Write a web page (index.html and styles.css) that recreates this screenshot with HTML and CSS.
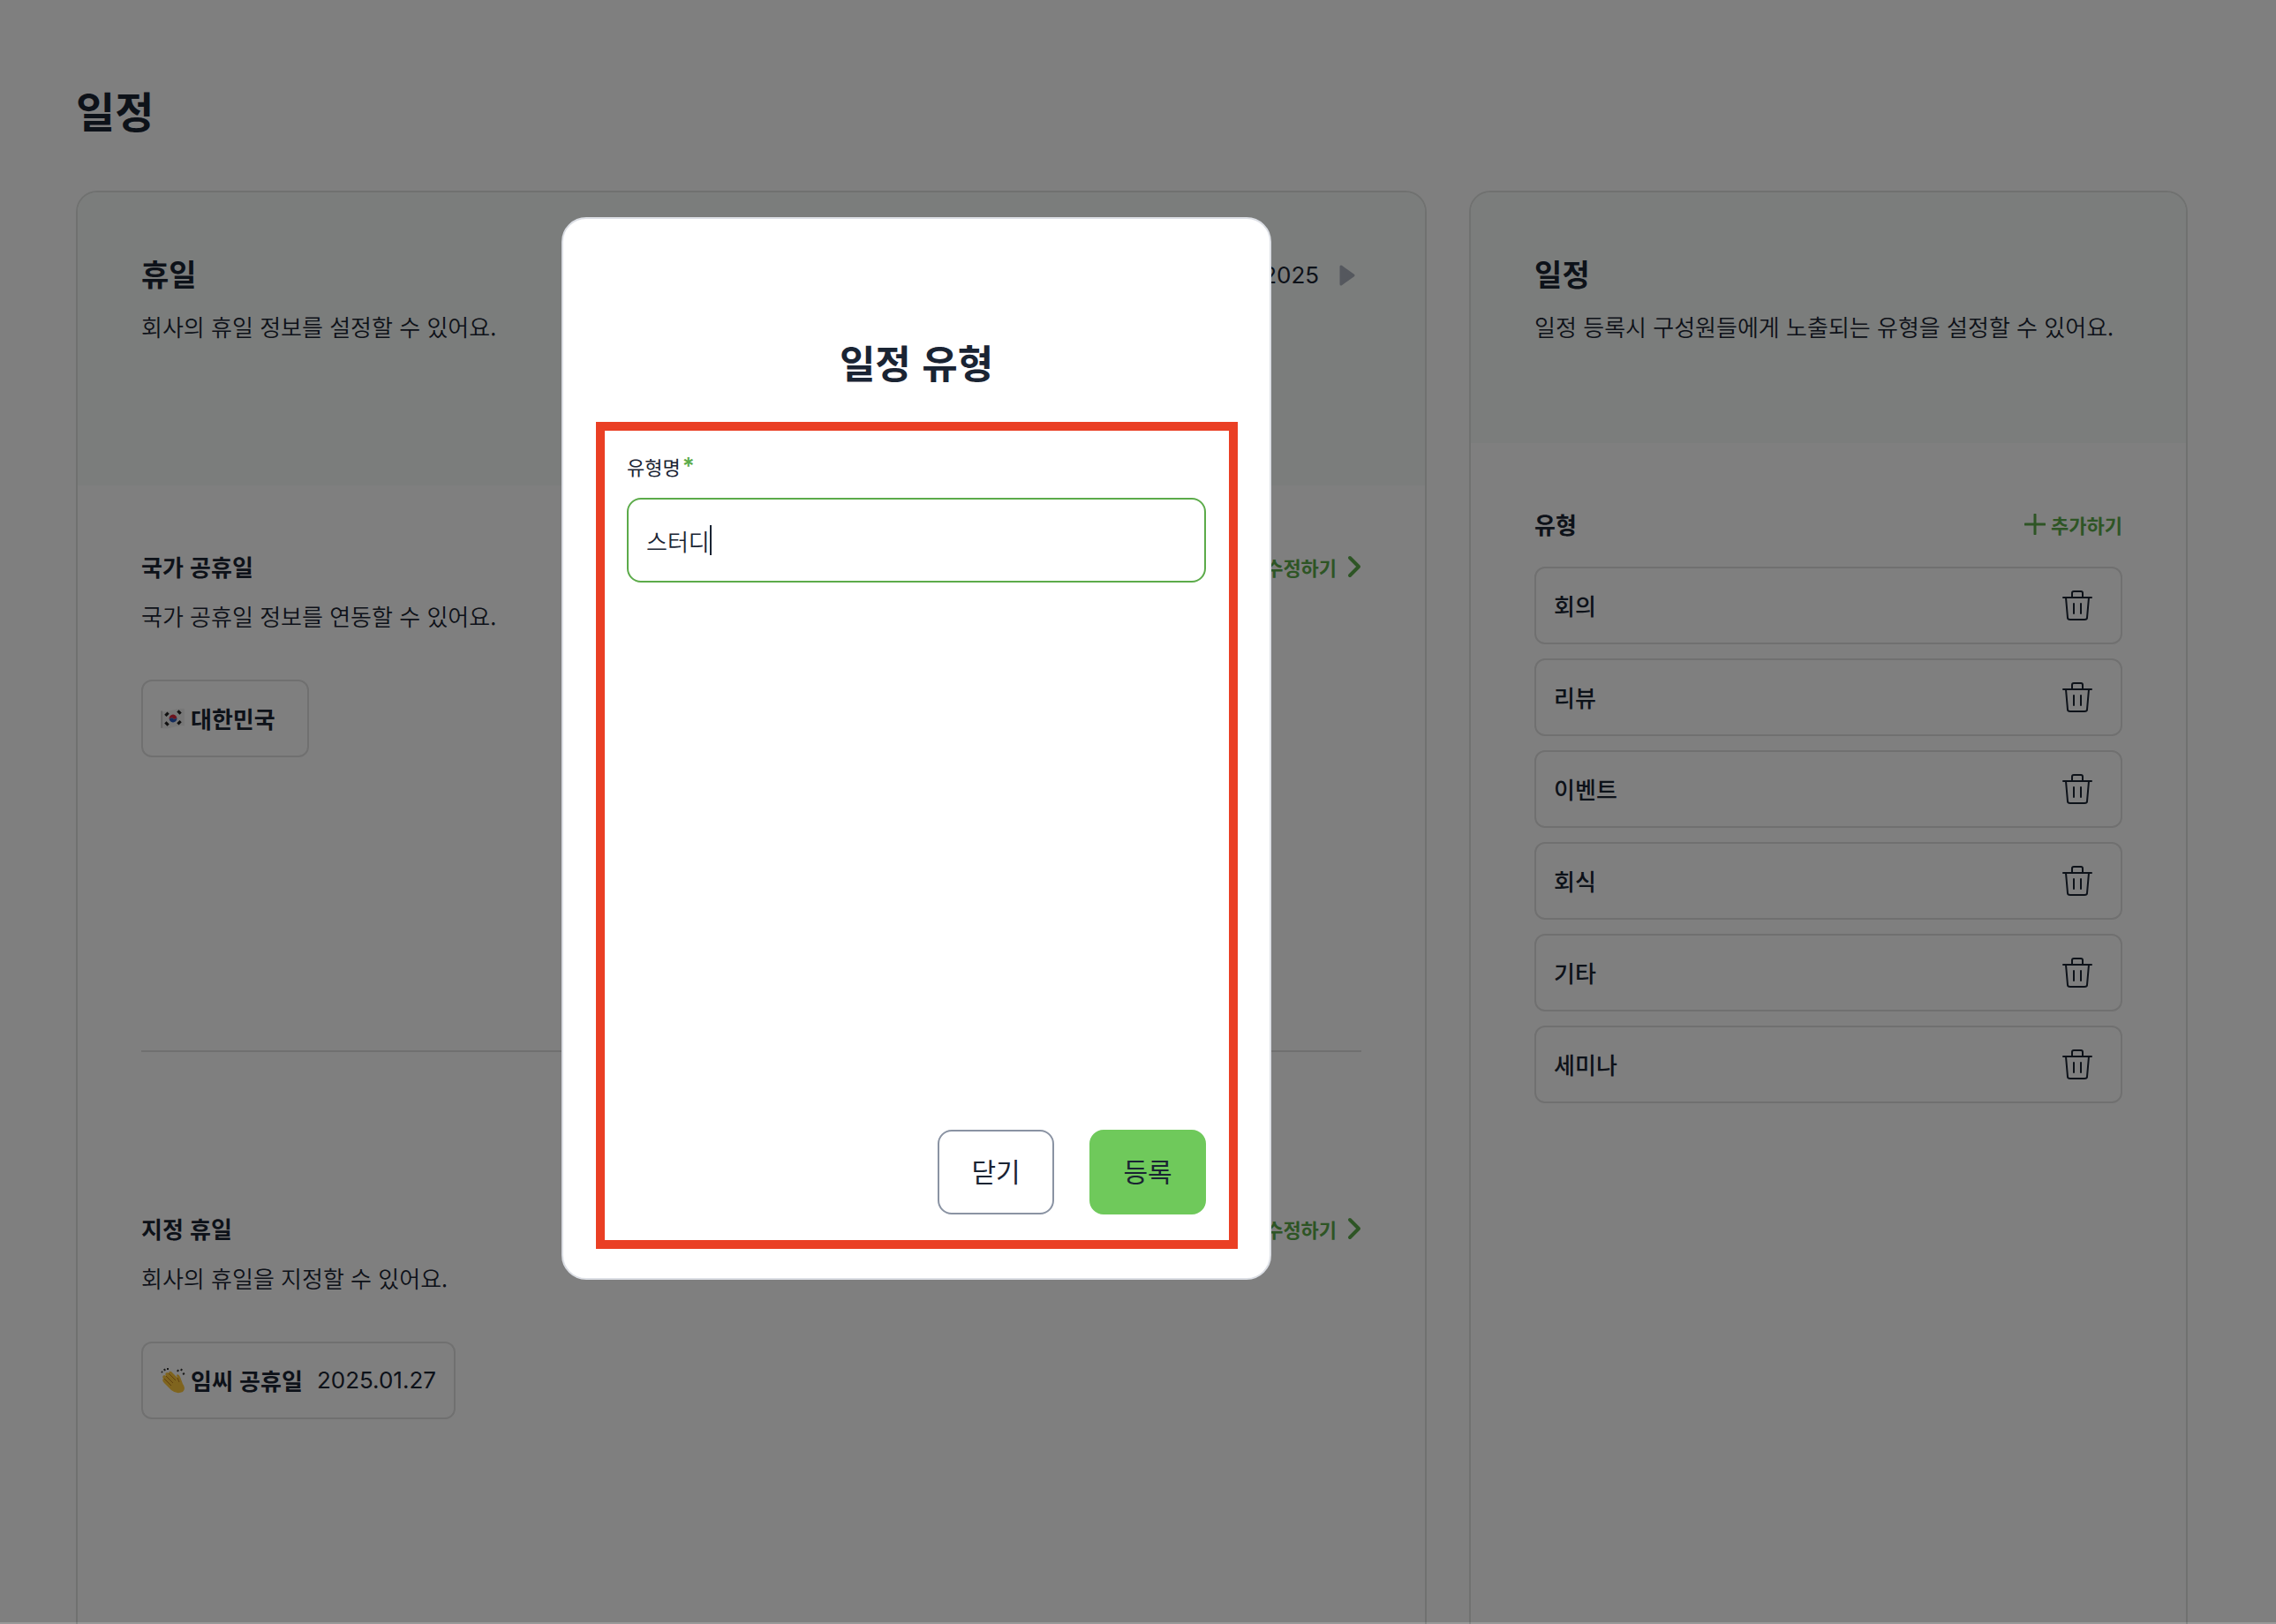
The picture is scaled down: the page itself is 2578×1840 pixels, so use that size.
FILE: index.html
```html
<!DOCTYPE html>
<html lang="ko">

<head>
    <meta charset="UTF-8">
    <meta name="viewport" content="width=device-width, initial-scale=1.0">
    <title>일정</title>
    <link rel="stylesheet" href="styles.css">
</head>

<body>
    <svg class="symbols" aria-hidden="true">
        <symbol id="trash" viewBox="0 0 34 36">
            <path d="M1 9H33M11 9V4Q11 2 13 2H21Q23 2 23 4V9M4 9L6 32Q6 34 9 34H25Q28 34 28 32L30 9M13 16V27M21 16V27" fill="none" stroke="currentColor" stroke-width="2" stroke-linecap="round" stroke-linejoin="round"/>
        </symbol>
        <symbol id="chevron" viewBox="0 0 16 26">
            <path d="M3 3L13 13L3 23" fill="none" stroke="currentColor" stroke-width="4" stroke-linecap="round" stroke-linejoin="round"/>
        </symbol>
    </svg>

    <main class="page">
        <h1 class="page-title">일정</h1>

        <div class="cards">
            <section class="card">
                <header class="card-header card-header-tall">
                    <div>
                        <h2 class="card-title">휴일</h2>
                        <p class="desc">회사의 휴일 정보를 설정할 수 있어요.</p>
                    </div>
                    <div class="year">
                        <button class="year-btn" type="button" aria-label="이전 연도">
                            <svg width="20" height="26" viewBox="0 0 20 26"><path d="M17 3V23L3 13Z" fill="currentColor" stroke="currentColor" stroke-width="3" stroke-linejoin="round"/></svg>
                        </button>
                        <span>2025</span>
                        <button class="year-btn" type="button" aria-label="다음 연도">
                            <svg width="20" height="26" viewBox="0 0 20 26"><path d="M3 3V23L17 13Z" fill="currentColor" stroke="currentColor" stroke-width="3" stroke-linejoin="round"/></svg>
                        </button>
                    </div>
                </header>

                <div class="card-body">
                    <section class="block">
                        <div class="block-head">
                            <h3 class="block-title">국가 공휴일</h3>
                            <a class="link" href="#">수정하기 <svg width="16" height="26"><use href="#chevron"/></svg></a>
                        </div>
                        <p class="desc">국가 공휴일 정보를 연동할 수 있어요.</p>
                        <div class="chip chip-country">
                            <svg class="emoji" viewBox="0 0 26 26" aria-hidden="true">
                                <path d="M1 5C8 8 17 1 25 3V21C17 19 8 26 1 23Z" fill="#eeeeee"/>
                                <path d="M1 5V23" stroke="#aaaaaa"/>
                                <path d="M9 14A4 4 0 0 1 17 12Q15 15 13 13Q11 11 9 14Z" fill="#d9243c"/>
                                <path d="M9 14A4 4 0 0 0 17 12Q15 15 13 13Q11 11 9 14Z" fill="#2456b8"/>
                                <path d="M5 10L8 7M18 19L21 16M5 17L8 20M18 5L21 8" stroke="#222222" stroke-width="3"/>
                            </svg>
                            <strong>대한민국</strong>
                        </div>
                    </section>

                    <hr class="divider">

                    <section>
                        <div class="block-head">
                            <h3 class="block-title">지정 휴일</h3>
                            <a class="link" href="#">수정하기 <svg width="16" height="26"><use href="#chevron"/></svg></a>
                        </div>
                        <p class="desc">회사의 휴일을 지정할 수 있어요.</p>
                        <div class="chip">
                            <svg class="emoji" viewBox="0 0 28 30" aria-hidden="true">
                                <path d="M3 13Q1 10 4 9L6 10Q4 6 8 6L9 7Q9 4 12 5L19 12L18 9Q20 7 22 11L25 19Q29 24 25 28Q18 31 12 26L4 18Q1 15 3 13Z" fill="#ffc83d"/>
                                <path d="M4 13L12 21M6 10L14 18M9 7L17 15M19 12L21 17" fill="none" stroke="#c07f1e"/>
                                <path d="M1 5L2 6M4 2L5 4M8 1L8 3M20 3L19 5M24 2L23 4M27 7L25 8" stroke="#333333" stroke-width="2"/>
                            </svg>
                            <strong>임씨 공휴일</strong>
                            <time class="date" datetime="2025-01-27">2025.01.27</time>
                        </div>
                    </section>
                </div>
            </section>

            <section class="card">
                <header class="card-header">
                    <div>
                        <h2 class="card-title">일정</h2>
                        <p class="desc">일정 등록시 구성원들에게 노출되는 유형을 설정할 수 있어요.</p>
                    </div>
                </header>

                <div class="card-body">
                    <div class="block-head">
                        <h3 class="block-title">유형</h3>
                        <button class="link link-add" type="button">
                            <svg width="24" height="24" viewBox="0 0 24 24"><path d="M12 1V23M1 12H23" stroke="currentColor" stroke-width="3" stroke-linecap="round"/></svg>
                            추가하기
                        </button>
                    </div>
                    <ul class="types">
                        <li class="type">회의<button class="trash-btn" type="button" aria-label="회의 삭제"><svg width="34" height="36"><use href="#trash"/></svg></button></li>
                        <li class="type">리뷰<button class="trash-btn" type="button" aria-label="리뷰 삭제"><svg width="34" height="36"><use href="#trash"/></svg></button></li>
                        <li class="type">이벤트<button class="trash-btn" type="button" aria-label="이벤트 삭제"><svg width="34" height="36"><use href="#trash"/></svg></button></li>
                        <li class="type">회식<button class="trash-btn" type="button" aria-label="회식 삭제"><svg width="34" height="36"><use href="#trash"/></svg></button></li>
                        <li class="type">기타<button class="trash-btn" type="button" aria-label="기타 삭제"><svg width="34" height="36"><use href="#trash"/></svg></button></li>
                        <li class="type">세미나<button class="trash-btn" type="button" aria-label="세미나 삭제"><svg width="34" height="36"><use href="#trash"/></svg></button></li>
                    </ul>
                </div>
            </section>
        </div>
    </main>

    <div class="overlay"></div>

    <form class="modal" role="dialog" aria-labelledby="modalTitle">
        <h2 class="modal-title" id="modalTitle">일정 유형</h2>
        <label class="label" for="typeName">유형명<span class="required">*</span></label>
        <div class="field">
            <input class="input" type="text" id="typeName" value="스터디">
            <span class="caret"></span>
        </div>
        <div class="actions">
            <button class="btn" type="button">닫기</button>
            <button class="btn btn-primary" type="submit">등록</button>
        </div>
        <div class="highlight"></div>
    </form>
</body>

</html>
```
FILE: styles.css
```css
* {
    box-sizing: border-box;
}

body {
    margin: 0;
    background-color: #fff;
    color: #1a2433;
    font-family: "Noto Sans CJK KR", sans-serif;
    font-size: 26px;
    line-height: 40px;
}

h1, h2, h3, p, ul {
    margin: 0;
    padding: 0;
}

button, input {
    font: inherit;
    color: inherit;
}

button {
    cursor: pointer;
}

svg {
    display: block;
    flex: none;
}

.symbols {
    display: none;
}

.page {
    display: flex;
    flex-direction: column;
    min-height: 100vh;
    padding: 88px 100px 0 86px;
}

.page-title {
    margin-bottom: 56px;
    font-size: 48px;
    line-height: 72px;
}

.cards {
    display: grid;
    grid-template-columns: 47fr 25fr;
    flex: 1;
    gap: 48px;
}

.card {
    min-width: 0;
    border: 2px solid #e0e3e1;
    border-bottom: none;
    border-radius: 24px 24px 0 0;
    overflow: hidden;
}

.card-header {
    display: flex;
    justify-content: space-between;
    align-items: flex-start;
    min-height: 284px;
    padding: 68px 72px;
    background-color: #f6faf8;
}

.card-header-tall {
    min-height: 332px;
}

.card-title {
    margin-bottom: 16px;
    font-size: 34px;
    line-height: 48px;
}

.desc {
    font-weight: 350;
}

.year {
    display: flex;
    align-items: center;
    gap: 22px;
    padding: 2px 6px 0 0;
    font-family: Inter, sans-serif;
    line-height: 48px;
}

.year-btn {
    padding: 0;
    border: none;
    background: none;
    color: #aab0bc;
}

.card-body {
    padding: 72px;
}

.block {
    min-height: 568px;
}

.block-head {
    display: flex;
    justify-content: space-between;
    align-items: center;
    margin-bottom: 16px;
}

.block-title {
    font-size: 26px;
    line-height: 40px;
}

.link {
    display: flex;
    align-items: center;
    gap: 12px;
    padding: 0;
    border: none;
    background: none;
    color: #5cab4a;
    font-size: 22px;
    font-weight: bold;
    line-height: 40px;
    text-decoration: none;
}

.link-add {
    gap: 6px;
}

.chip {
    display: inline-flex;
    align-items: center;
    gap: 6px;
    height: 88px;
    margin-top: 52px;
    padding: 0 20px;
    border: 2px solid #e0e0e0;
    border-radius: 12px;
}

.chip-country {
    padding-right: 36px;
}

.emoji {
    width: 28px;
    height: 30px;
}

.date {
    margin-left: 10px;
    font-family: Inter, sans-serif;
}

.divider {
    height: 2px;
    margin: 0 0 180px;
    border: none;
    background-color: #e0e0e0;
}

.types {
    display: flex;
    flex-direction: column;
    gap: 16px;
    margin-top: 28px;
    list-style: none;
}

.type {
    display: flex;
    justify-content: space-between;
    align-items: center;
    height: 88px;
    padding: 0 32px 0 20px;
    border: 2px solid #e0e0e0;
    border-radius: 12px;
    font-weight: 500;
}

.trash-btn {
    padding: 0;
    border: none;
    background: none;
}

.overlay {
    position: fixed;
    inset: 0;
    border-bottom: 2px solid rgba(0, 0, 0, 0.4);
    background-color: rgba(0, 0, 0, 0.5);
    background-clip: padding-box;
}

.modal {
    position: absolute;
    top: 246px;
    left: 636px;
    display: flex;
    flex-direction: column;
    width: 804px;
    min-height: 1204px;
    padding: 130px 72px 72px;
    border: 2px solid #dcdfe5;
    border-radius: 28px;
    background-color: #fff;
}

.modal-title {
    margin-bottom: 70px;
    font-size: 44px;
    line-height: 64px;
    text-align: center;
}

.label {
    display: flex;
    gap: 2px;
    height: 32px;
    margin-bottom: 20px;
    font-size: 22px;
    font-weight: 400;
    line-height: 32px;
}

.required {
    color: #5cab4a;
    font-family: Inter, sans-serif;
    font-size: 26px;
    font-weight: 600;
}

.field {
    position: relative;
}

.input {
    display: block;
    width: 100%;
    height: 96px;
    padding: 0 20px;
    border: 2px solid #5cab4a;
    border-radius: 16px;
    outline: none;
    background-color: #fff;
    font-weight: 350;
}

/* text cursor after the typed value */
.caret {
    position: absolute;
    top: 31px;
    left: 94px;
    width: 2px;
    height: 34px;
    background-color: #1a2433;
}

.actions {
    display: flex;
    justify-content: flex-end;
    gap: 40px;
    margin-top: auto;
}

.btn {
    width: 132px;
    height: 96px;
    padding: 0 0 4px;
    border: 2px solid #8a93a3;
    border-radius: 16px;
    background-color: #fff;
    font-size: 30px;
    font-weight: 400;
}

.btn-primary {
    border-color: #6fc95b;
    background-color: #6fc95b;
}

.highlight {
    position: absolute;
    top: 230px;
    right: 36px;
    bottom: 33px;
    left: 37px;
    border: 10px solid #ea3f24;
    pointer-events: none;
}
```
